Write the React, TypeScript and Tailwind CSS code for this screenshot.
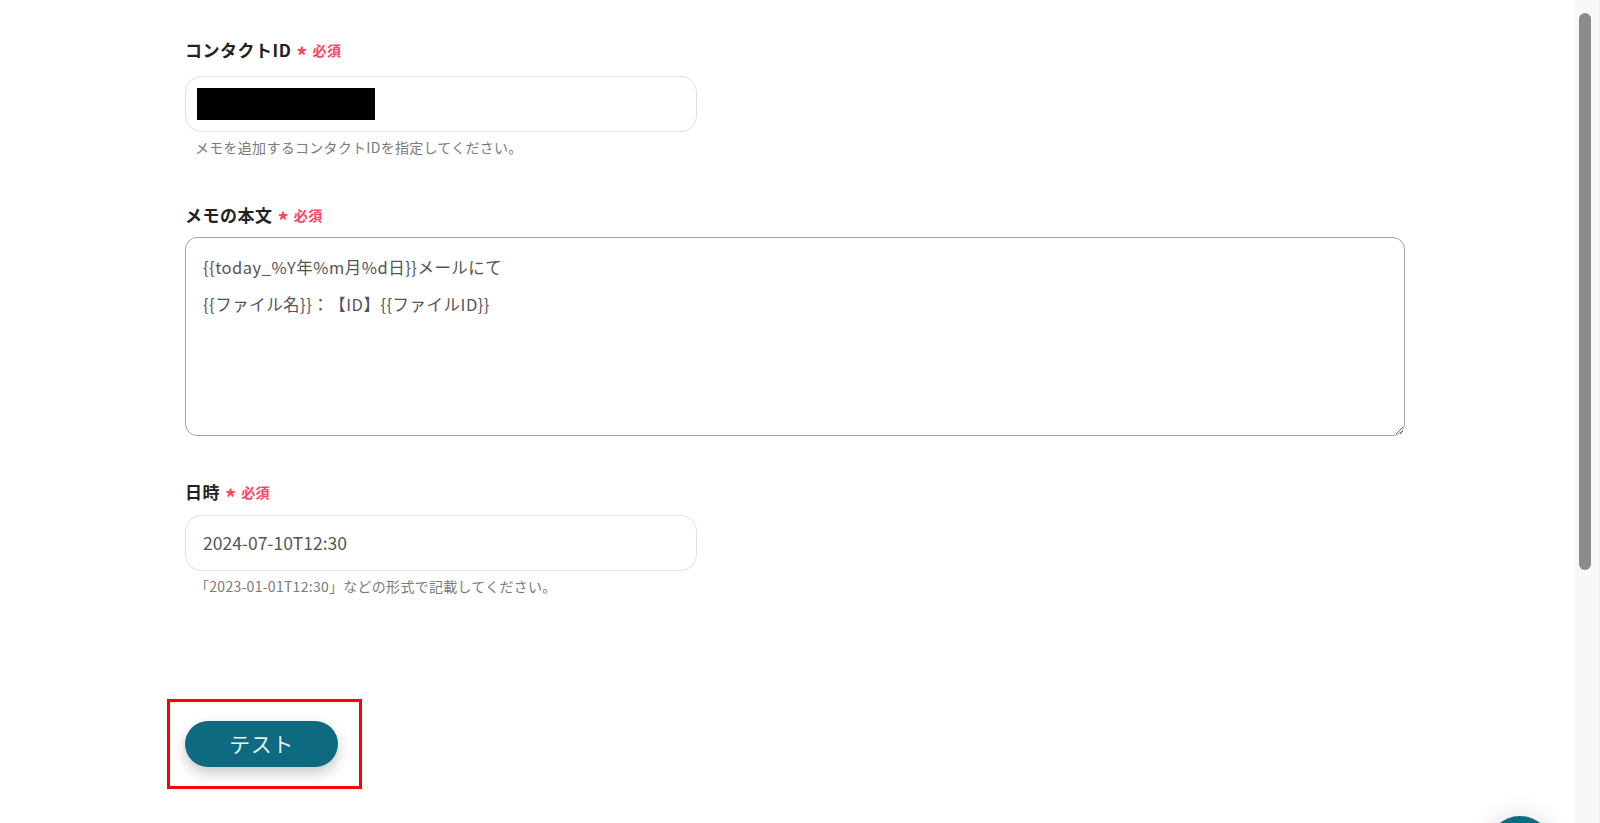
import React from "react";

const font = { fontFamily: '"Noto Sans CJK JP", "Noto Sans", sans-serif' };

function Label({ text }: { text: string }) {
  return (
    <div className="flex h-[18px] items-center">
      <span className="text-[17px] font-bold leading-[18px] tracking-[0.03em] text-[#222]">{text}</span>
      <span className="ml-[5px] mt-[8px] text-[22px] font-bold leading-[18px] text-[#ff4562]">*</span>
      <span className="ml-[5px] text-[14px] font-bold leading-[18px] tracking-[0.03em] text-[#ff4562]">必須</span>
    </div>
  );
}

function Helper({ text }: { text: string }) {
  return <p className="mt-[7px] h-[16px] pl-[10px] text-[14px] leading-[16px] tracking-[0.02em] text-[#7a7a7a]">{text}</p>;
}

export default function App() {
  return (
    <div className="flex h-[823px] w-[1600px] overflow-hidden bg-white text-[#333]" style={font}>
      <main className="relative flex-1 pl-[167px] pt-[41px]">
        <div className="ml-[18px]">
          <Label text="コンタクトID" />
          <div className="mt-[17px] flex h-[56px] w-[512px] items-center rounded-[16px] border border-[#dfe3e7] pl-[11px]">
            <div className="h-[32px] w-[178px] bg-black" />
          </div>
          <Helper text="メモを追加するコンタクトIDを指定してください。" />

          <div className="mt-[51px]">
            <Label text="メモの本文" />
          </div>
          <textarea
            readOnly
            className="mt-[13px] block h-[199px] w-[1220px] resize-y rounded-[12px] border border-[#a3a3a3] px-[17px] pt-[11px] text-[16.5px] leading-[37px] tracking-[0.03em] text-[#555] outline-none [text-spacing-trim:space-all]"
            defaultValue={"{{today_%Y年%m月%d日}}メールにて\n{{ファイル名}}：【ID】{{ファイルID}}"}
          />

          <div className="mt-[47px]">
            <Label text="日時" />
          </div>
          <div className="mt-[14px] flex h-[56px] w-[512px] items-center rounded-[16px] border border-[#dfe3e7] pl-[17px] text-[17.5px] text-[#555]">
            2024-07-10T12:30
          </div>
          <Helper text="「2023-01-01T12:30」などの形式で記載してください。" />
        </div>

        <div className="mt-[105px] h-[90px] w-[195px] border-[3px] border-[#ff0000] pl-[15px] pt-[19px]">
          <button className="flex h-[46px] w-[153px] items-center justify-center rounded-full bg-[#0d6a80] text-[21px] tracking-[0.02em] text-[#eaf2f4] shadow-[0_6px_14px_rgba(0,0,0,0.22)]">
            テスト
          </button>
        </div>

        <div className="absolute left-[1488px] top-[816px] h-[64px] w-[64px] rounded-full bg-[#0d6a80] shadow-[0_0_24px_rgba(0,0,0,0.15)]" />
      </main>

      <div className="w-[25px] shrink-0 border-r border-[#eeeeee] bg-[#f8f8f8] pl-[4px] pt-[13px]">
        <div className="h-[557px] w-[12px] rounded-full bg-[#8b8b8b]" />
      </div>
    </div>
  );
}
